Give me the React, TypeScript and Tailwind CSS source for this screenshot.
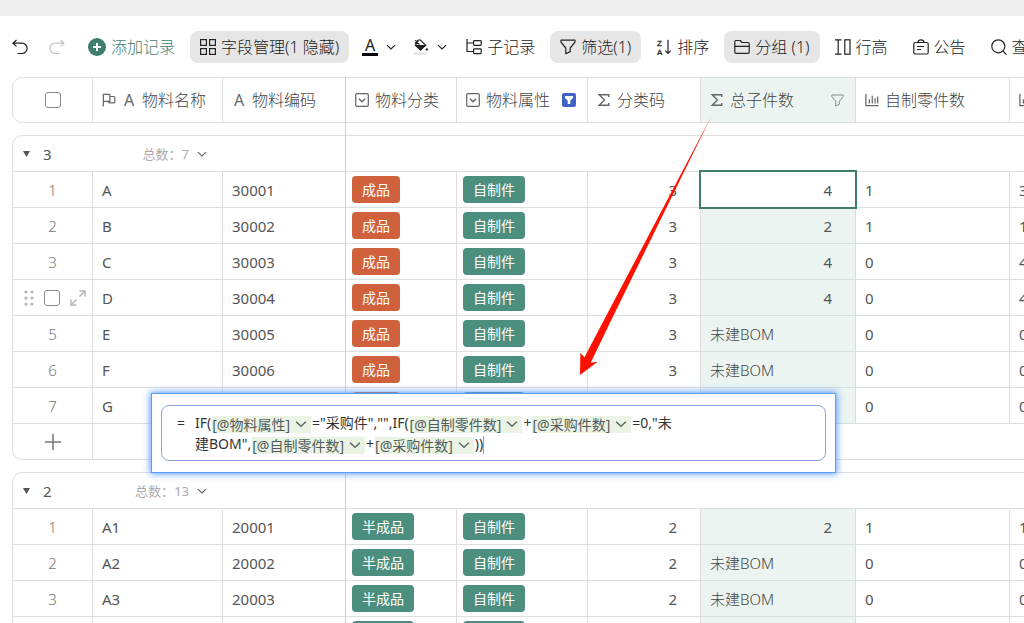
import React, { ReactNode } from "react";
import clsx from "clsx";

interface RecordRow {
  name: string;
  code: string;
  category: string;
  attribute: string;
  classCode: number;
  total: number | string;
  selfMade: number;
  purchased: number;
  hovered?: boolean;
  selected?: boolean;
}

interface RecordGroup {
  value: number;
  count: number;
  rows: RecordRow[];
  showAdd?: boolean;
}

const NO_BOM = "未建BOM";

const finished = (
  name: string,
  code: string,
  total: number | string,
  selfMade: number,
  purchased: number
): RecordRow => ({
  name,
  code,
  category: "成品",
  attribute: "自制件",
  classCode: 3,
  total,
  selfMade,
  purchased,
});

const semi = (
  name: string,
  code: string,
  total: number | string,
  selfMade: number,
  purchased: number
): RecordRow => ({
  ...finished(name, code, total, selfMade, purchased),
  category: "半成品",
  classCode: 2,
});

const groups: RecordGroup[] = [
  {
    value: 3,
    count: 7,
    showAdd: true,
    rows: [
      { ...finished("A", "30001", 4, 1, 3), selected: true },
      finished("B", "30002", 2, 1, 1),
      finished("C", "30003", 4, 0, 4),
      { ...finished("D", "30004", 4, 0, 4), hovered: true },
      finished("E", "30005", NO_BOM, 0, 0),
      finished("F", "30006", NO_BOM, 0, 0),
      finished("G", "30007", NO_BOM, 0, 0),
    ],
  },
  {
    value: 2,
    count: 13,
    rows: [
      semi("A1", "20001", 2, 1, 1),
      semi("A2", "20002", NO_BOM, 0, 0),
      semi("A3", "20003", NO_BOM, 0, 0),
      semi("A4", "20004", NO_BOM, 0, 0),
    ],
  },
];

/* ---------- Icons ---------- */

interface IconProps {
  size?: number;
  className?: string;
  children?: ReactNode;
}

function Icon({ size = 16, className, children }: IconProps) {
  return (
    <svg
      width={size}
      height={size}
      viewBox="0 0 16 16"
      fill="none"
      stroke="currentColor"
      strokeWidth="1.2"
      className={clsx("shrink-0", className)}
      aria-hidden="true"
    >
      {children}
    </svg>
  );
}

const UndoIcon = () => (
  <Icon>
    <path d="M4.5 1 1 4.2l3.500 3.200M1 4.200h9a5 5 0 0 1 0 10.300H5.500" />
  </Icon>
);

const RedoIcon = () => (
  <Icon>
    <path d="M11.500 1 15 4.200l-3.500 3.200M15 4.200H6a5 5 0 0 0 0 10.300h4.500" />
  </Icon>
);

const AddIcon = () => (
  <svg width="18" height="18" viewBox="0 0 18 18" className="shrink-0" aria-hidden="true">
    <circle cx="9" cy="9" r="9" fill="#3f7d6e" />
    <path d="M9 5v8M5 9h8" stroke="#fff" strokeWidth="2" />
  </svg>
);

const FieldsIcon = () => (
  <Icon>
    <rect x=".6" y=".6" width="5.800" height="5.800" />
    <rect x="9.600" y=".6" width="5.800" height="5.800" />
    <rect x=".6" y="9.600" width="5.800" height="5.800" />
    <rect x="9.600" y="9.600" width="5.800" height="5.800" />
  </Icon>
);

const BucketIcon = () => (
  <Icon>
    <path d="M2.200 1.200 6.500 5.500M2 4.500 5.500 1M5.500 1h2L12.500 6.200 7.500 11 2.500 6.200z" />
    <path d="M2.800 6.500h9.400L7.500 11z" fill="currentColor" />
    <circle cx="13.800" cy="10.400" r="1.200" fill="currentColor" stroke="none" />
    <path d="M1 14.500h13" stroke="#e4e4e4" strokeWidth="2.500" />
  </Icon>
);

const SubRecordIcon = () => (
  <Icon>
    <path d="M1 0v12.500h6.500M1 4h6.500" />
    <rect x="7.600" y="1.600" width="7.600" height="4.800" rx=".8" />
    <rect x="7.600" y="9.800" width="7.600" height="4.800" rx=".8" />
  </Icon>
);

const FunnelIcon = ({ size = 16 }: IconProps) => (
  <Icon size={size}>
    <path d="M1 1.200h14v2L10.200 9v3.600l-4.400 2.200V9L1 3.200z" strokeLinejoin="round" />
  </Icon>
);

const SortIcon = () => (
  <Icon className="font-['Liberation_Sans',sans-serif]">
    <text x="1" y="6.500" fontSize="8" fill="currentColor" strokeWidth=".3">
      Z
    </text>
    <text x="1" y="15.500" fontSize="8" fill="currentColor" strokeWidth=".3">
      A
    </text>
    <path d="M12 .8v13.700M9.200 11.700 12 14.500l2.800-2.800" />
  </Icon>
);

const FolderIcon = () => (
  <Icon>
    <path
      d="M.8 13V2.800C.8 2 1.300 1.500 2 1.500h4.200l1.800 2h6c.7 0 1.200.5 1.200 1.200V13c0 .7-.5 1.300-1.200 1.300H2c-.7 0-1.200-.6-1.200-1.300zM.8 7.300h14.400"
      strokeLinejoin="round"
    />
  </Icon>
);

const RowHeightIcon = () => (
  <Icon>
    <path d="M0 .8h6.500M0 15.200h6.500M3.200.8v14.400" />
    <rect x="9.800" y=".8" width="5.200" height="14.400" />
  </Icon>
);

const NoticeIcon = () => (
  <Icon>
    <path d="M5 3.500C5 1.800 6.300.8 8 .8s3 1 3 2.700M4 7.500h7M4 10.500h4" />
    <rect x=".8" y="3.500" width="14.400" height="11.500" rx="1.500" />
  </Icon>
);

const SearchIcon = () => (
  <Icon>
    <circle cx="7.300" cy="7.300" r="6.500" />
    <path d="m12 12 3.500 3.800" />
  </Icon>
);

const ChevronIcon = ({ size = 10, className }: IconProps) => (
  <Icon size={size} className={className}>
    <path d="m1.500 5 6.500 6 6.500-6" strokeWidth="2" />
  </Icon>
);

const FlagIcon = () => (
  <Icon size={14}>
    <path
      d="M1.500 15.500V1.500h7.500v8H1.500M9 4h4.500c.8 0 1.200.5 1.200 1.200v4.600c0 .8-.5 1.400-1.200 1.400H8.500c-.7 0-1.200-.6-1.200-1.700"
      strokeWidth="1.400"
    />
  </Icon>
);

const SelectIcon = () => (
  <Icon size={14}>
    <rect x=".8" y=".8" width="14.400" height="14.400" rx="1.500" strokeWidth="1.400" />
    <path d="m4.500 6.500 3.500 3.500 3.500-3.500" strokeWidth="1.600" />
  </Icon>
);

const SigmaIcon = () => (
  <Icon size={14}>
    <path d="M13.500 4.500V2H2.500l6 6-6 6h11v-2.500" strokeWidth="1.600" />
  </Icon>
);

const ChartIcon = () => (
  <Icon size={14}>
    <path d="M1 1v13.500h14.500M5 7v5M8.300 3v9M11.500 6v6M14.500 4v8" strokeWidth="1.400" />
  </Icon>
);

const TextIcon = () => (
  <span
    className="w-3.5 text-center text-base leading-5 font-normal"
    aria-hidden="true"
  >
    A
  </span>
);

const ActiveFilterIcon = () => (
  <svg width="14" height="14" viewBox="0 0 14 14" className="ml-1.5 shrink-0" aria-hidden="true">
    <rect width="14" height="14" rx="2" fill="#3f62c4" />
    <path d="M3 3h8v2L8.300 7.500V11H5.700V7.500L3 5z" fill="#fff" />
  </svg>
);

const GripIcon = () => (
  <svg width="10" height="16" viewBox="0 0 10 16" fill="#b5b5b5" aria-hidden="true">
    {[2, 8, 14].map((y) => (
      <React.Fragment key={y}>
        <circle cx="2" cy={y} r="1.600" />
        <circle cx="8" cy={y} r="1.600" />
      </React.Fragment>
    ))}
  </svg>
);

const ExpandIcon = () => (
  <Icon>
    <path d="M9.500 1H15v5.500M15 1 9.500 6.500M1 9.500V15h5.500M1 15l5.500-5.500" strokeWidth="1.500" />
  </Icon>
);

/* ---------- Toolbar ---------- */

interface ToolButtonProps {
  icon: ReactNode;
  label: string;
  active?: boolean;
  className?: string;
}

function ToolButton({ icon, label, active = false, className }: ToolButtonProps) {
  return (
    <button
      className={clsx(
        "flex h-8 shrink-0 items-center gap-[5px] rounded-lg px-2.5 text-base whitespace-nowrap",
        active && "bg-[#e6e6e6]",
        className
      )}
    >
      {icon}
      {label}
    </button>
  );
}

function Toolbar() {
  return (
    <div className="flex h-[61px] shrink-0 items-center gap-[5px] overflow-hidden pl-1 font-light text-[#222]">
      <button className="flex h-8 w-8 shrink-0 items-center justify-center" aria-label="撤销">
        <UndoIcon />
      </button>
      <button
        className="flex h-8 w-8 shrink-0 items-center justify-center text-[#c4c4c4]"
        aria-label="恢复"
      >
        <RedoIcon />
      </button>
      <ToolButton icon={<AddIcon />} label="添加记录" className="text-[#3f7d6e]" />
      <ToolButton icon={<FieldsIcon />} label="字段管理(1 隐藏)" active />
      <button
        className="flex h-8 w-[46px] shrink-0 items-center gap-2 pl-2"
        aria-label="字体颜色"
      >
        <span className="w-4 border-b-3 border-black text-center text-base leading-[15px] font-normal">
          A
        </span>
        <ChevronIcon />
      </button>
      <button
        className="flex h-8 w-[46px] shrink-0 items-center gap-2 pl-2"
        aria-label="填充颜色"
      >
        <BucketIcon />
        <ChevronIcon />
      </button>
      <ToolButton icon={<SubRecordIcon />} label="子记录" />
      <ToolButton icon={<FunnelIcon />} label="筛选(1)" active />
      <ToolButton icon={<SortIcon />} label="排序" />
      <ToolButton icon={<FolderIcon />} label="分组 (1)" active />
      <ToolButton icon={<RowHeightIcon />} label="行高" />
      <ToolButton icon={<NoticeIcon />} label="公告" />
      <ToolButton icon={<SearchIcon />} label="查找" />
    </div>
  );
}

/* ---------- Table ---------- */

interface HeaderCellProps {
  icon: ReactNode;
  label: string;
  extra?: ReactNode;
  className?: string;
}

function HeaderCell({ icon, label, extra, className }: HeaderCellProps) {
  return (
    <th
      className={clsx(
        "border-y border-r border-[#dedede] px-[9px] font-light",
        className
      )}
    >
      <div className="flex items-center gap-1.5 text-base whitespace-nowrap text-[#666]">
        {icon}
        <span className="text-[#444]">{label}</span>
        {extra}
      </div>
    </th>
  );
}

function Checkbox({ label }: { label: string }) {
  return (
    <input
      type="checkbox"
      aria-label={label}
      className="block h-4 w-4 appearance-none rounded-[3px] border border-[#8a8a92] bg-white"
    />
  );
}

function Tag({ label }: { label: string }) {
  return (
    <span
      className={clsx(
        "inline-block h-[27px] rounded px-2.5 align-middle text-sm leading-[27px] text-white",
        label === "成品" ? "bg-[#cf613c]" : "bg-[#4c8f7f]"
      )}
    >
      {label}
    </span>
  );
}

const cell = "border-r border-b border-[#dedede] px-[9px]";
const frozen = "border-r border-r-[#cfcfd6]";

function GapRow() {
  return (
    <tr className="h-3">
      <td colSpan={3} className={frozen} />
      <td colSpan={6} />
    </tr>
  );
}

function DataRow({ row, index }: { row: RecordRow; index: number }) {
  const isNumber = typeof row.total === "number";

  return (
    <tr className="h-9">
      <td className="border-x border-b border-[#dedede] text-center font-light text-[#777]">
        {row.hovered ? (
          <div className="flex items-center justify-center gap-2.5 pl-1 text-[#b5b5b5]">
            <GripIcon />
            <Checkbox label={`选择 ${row.name}`} />
            <button aria-label={`展开 ${row.name}`}>
              <ExpandIcon />
            </button>
          </div>
        ) : (
          index
        )}
      </td>
      <td className={cell}>{row.name}</td>
      <td className={clsx(cell, frozen)}>{row.code}</td>
      <td className="border-r border-b border-[#dedede] px-1.5">
        <Tag label={row.category} />
      </td>
      <td className="border-r border-b border-[#dedede] px-1.5">
        <Tag label={row.attribute} />
      </td>
      <td className="border-r border-b border-[#dedede] pr-[23px] text-right">
        {row.classCode}
      </td>
      <td
        className={clsx(
          "border-r border-b border-[#d5dfdc]",
          isNumber ? "pr-[23px] text-right" : "pl-[9px] font-light text-[#444]",
          row.selected ? "relative z-10 bg-white" : "bg-[#ebf4f1]"
        )}
      >
        {row.total}
        {row.selected && (
          <span className="pointer-events-none absolute -inset-0.5 border-2 border-[#3f7d6e]" />
        )}
      </td>
      <td className={cell}>{row.selfMade}</td>
      <td className={cell}>{row.purchased}</td>
    </tr>
  );
}

function GroupBody({ group }: { group: RecordGroup }) {
  return (
    <tbody>
      <GapRow />
      <tr className="h-[37px]">
        <td
          colSpan={2}
          className="rounded-tl-[10px] border-y border-l border-[#dedede] pr-4 pl-2.5"
        >
          <div className="flex items-center">
            <button className="text-[#555]" aria-label="折叠分组">
              <svg width="7" height="6" viewBox="0 0 7 6" fill="currentColor">
                <path d="M0 0h7L3.500 6z" />
              </svg>
            </button>
            <span className="ml-[13px] leading-6">{group.value}</span>
            <button className="ml-auto flex items-center gap-2 text-[13px] text-[#aaa]">
              总数：{group.count}
              <ChevronIcon className="text-[#666]" />
            </button>
          </div>
        </td>
        <td className={clsx("border-y border-[#dedede]", frozen)} />
        <td colSpan={6} className="border-y border-[#dedede]" />
      </tr>
      {group.rows.map((row, i) => (
        <DataRow key={row.code} row={row} index={i + 1} />
      ))}
      {group.showAdd && (
        <tr className="h-9">
          <td className="rounded-bl-[10px] border-x border-b border-[#dedede]">
            <button className="mx-auto block text-[#777]" aria-label="添加记录">
              <Icon>
                <path d="M8 0v16M0 8h16" strokeWidth="1.500" />
              </Icon>
            </button>
          </td>
          <td colSpan={2} className={clsx("border-b border-[#dedede]", frozen)} />
          <td colSpan={6} className="border-b border-[#dedede]" />
        </tr>
      )}
    </tbody>
  );
}

function RecordTable() {
  return (
    <table className="ml-3 w-[1153px] table-fixed border-separate border-spacing-0 text-left text-[15px] leading-5 text-[#555]">
      <colgroup>
        <col className="w-[81px]" />
        <col className="w-[130px]" />
        <col className="w-[123px]" />
        <col className="w-[111px]" />
        <col className="w-[131px]" />
        <col className="w-[113px]" />
        <col className="w-[155px]" />
        <col className="w-[154px]" />
        <col className="w-[155px]" />
      </colgroup>
      <thead>
        <tr className="h-[46px]">
          <th className="rounded-l-[10px] border border-[#dedede]">
            <div className="flex justify-center">
              <Checkbox label="全选" />
            </div>
          </th>
          <HeaderCell
            icon={
              <>
                <FlagIcon />
                <TextIcon />
              </>
            }
            label="物料名称"
          />
          <HeaderCell icon={<TextIcon />} label="物料编码" className="border-r-[#cfcfd6]" />
          <HeaderCell icon={<SelectIcon />} label="物料分类" />
          <HeaderCell icon={<SelectIcon />} label="物料属性" extra={<ActiveFilterIcon />} />
          <HeaderCell icon={<SigmaIcon />} label="分类码" />
          <HeaderCell
            icon={<SigmaIcon />}
            label="总子件数"
            extra={
              <button className="mr-0.5 ml-auto text-[#888]" aria-label="筛选总子件数">
                <FunnelIcon size={13} />
              </button>
            }
            className="bg-[#ebf4f1]"
          />
          <HeaderCell icon={<ChartIcon />} label="自制零件数" />
          <HeaderCell icon={<ChartIcon />} label="采购件数" />
        </tr>
      </thead>
      {groups.map((group) => (
        <GroupBody key={group.value} group={group} />
      ))}
    </table>
  );
}

/* ---------- Formula popup ---------- */

function FieldRef({ name }: { name: string }) {
  return (
    <span className="mx-px inline-flex h-[17px] items-center gap-[5px] bg-[#eaf3e4] pr-1 align-middle leading-[17px] text-[#505c5a]">
      [@{name}]
      <ChevronIcon size={12} className="text-[#5c6866]" />
    </span>
  );
}

function FormulaPopup() {
  return (
    <div className="absolute top-[393px] left-[151px] w-[685px] border border-[#5b9cff] bg-white px-[9px] py-[11px] shadow-[0_0_7px_1px_#5b9cff]">
      <div className="flex rounded-lg border border-[#8fa2dd] px-[15px] py-1.5 text-sm leading-[21px] text-[#333]">
        <span className="w-[18px] shrink-0">=</span>
        <div role="textbox" aria-label="公式" tabIndex={0} className="whitespace-nowrap">
          <div>
            IF(
            <FieldRef name="物料属性" />
            ="采购件","",IF(
            <FieldRef name="自制零件数" />+<FieldRef name="采购件数" />
            =0,"未
          </div>
          <div>
            建BOM",
            <FieldRef name="自制零件数" />+<FieldRef name="采购件数" />
            ))
            <span className="inline-block h-[18px] w-px bg-[#999] align-middle" />
          </div>
        </div>
      </div>
    </div>
  );
}

function PointerArrow() {
  return (
    <svg
      width="134"
      height="260"
      viewBox="578 117 134 260"
      className="pointer-events-none absolute top-[117px] left-[578px] z-20"
      aria-hidden="true"
    >
      <path
        d="M711 117 604 320 584.500 357.300 580.300 353 580 375 597.700 361.700 590.700 362.700 611.300 320z"
        fill="#ff1100"
      />
    </svg>
  );
}

export default function App() {
  return (
    <div className="relative flex h-screen flex-col overflow-hidden bg-white font-['Noto_Sans','Noto_Sans_CJK_SC',sans-serif]">
      <div className="h-4 shrink-0 bg-[#efefef]" />
      <Toolbar />
      <main className="min-h-0 flex-1 overflow-hidden">
        <RecordTable />
      </main>
      <PointerArrow />
      <FormulaPopup />
    </div>
  );
}
